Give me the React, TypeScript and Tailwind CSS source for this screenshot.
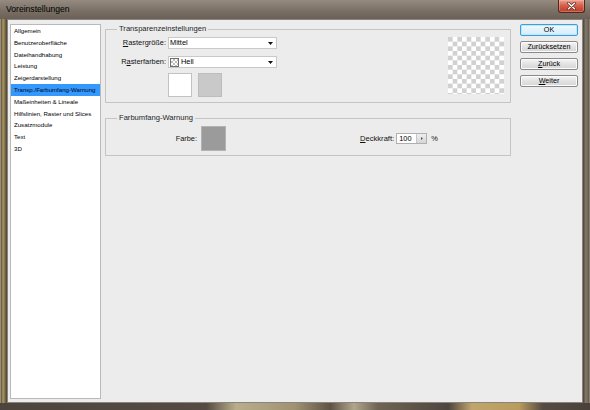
import React from "react";

const items = [
  "Allgemein",
  "Benutzeroberfläche",
  "Dateihandhabung",
  "Leistung",
  "Zeigerdarstellung",
  "Transp./Farbumfang-Warnung",
  "Maßeinheiten & Lineale",
  "Hilfslinien, Raster und Slices",
  "Zusatzmodule",
  "Text",
  "3D",
];

function Arrow() {
  return (
    <svg width="5" height="3" viewBox="0 0 5 3" className="shrink-0">
      <path d="M0 0h5L2.5 3z" fill="#111" />
    </svg>
  );
}

function Select({ children }: { children: React.ReactNode }) {
  return (
    <div className="ml-[2px] w-[109px] h-[12px] bg-white border border-[#c9c9c9] flex items-center pl-[1px] pr-[3px]">
      <div className="flex-1 flex items-center text-[7.4px] leading-none text-[#000]">{children}</div>
      <Arrow />
    </div>
  );
}

function Btn({ children, primary }: { children: React.ReactNode; primary?: boolean }) {
  return (
    <button
      className={
        primary
          ? "h-[12px] w-full rounded-[2px] border border-[#3d9fd8] bg-[linear-gradient(180deg,#f0f9fe,#d3ecfa)] text-[7.2px] leading-none text-[#000] shadow-[inset_0_0_0_1px_#bfe6fb]"
          : "h-[12px] w-full rounded-[2px] border border-[#8a8a8a] bg-[linear-gradient(180deg,#f6f6f6,#e2e2e2_50%,#d6d6d6)] text-[7.2px] leading-none text-[#000] shadow-[inset_0_0_0_1px_#fbfbfb]"
      }
    >
      {children}
    </button>
  );
}

export default function App() {
  return (
    <div className="w-[590px] h-[410px] flex flex-col overflow-hidden bg-[#6a6056] font-['Liberation_Sans',Arial,sans-serif] text-black">
      {/* title bar */}
      <div className="relative h-[19px] shrink-0 flex items-start bg-[linear-gradient(180deg,#958b81,#7a7066_55%,#6a6057)]">
        <span className="ml-[6px] mt-[4px] text-[8.6px] leading-[10px] text-[#000]">
          Voreinstellungen
        </span>
        <div className="absolute right-[5px] top-0 w-[27px] h-[13px] rounded-b-[3px] border border-t-0 border-[#4e2820] bg-[linear-gradient(180deg,#e9a292,#d4614b_45%,#bd3b27)] flex items-center justify-center shadow-[inset_0_0_0_1px_rgba(255,200,190,0.35)]">
          <svg width="9" height="8" viewBox="0 0 9 8">
            <path d="M1.5 1.2l6 5.6M7.5 1.2l-6 5.6" stroke="#5a2a22" strokeWidth="2.6" strokeLinecap="round" />
            <path d="M1.5 1.2l6 5.6M7.5 1.2l-6 5.6" stroke="#fff" strokeWidth="1.4" strokeLinecap="round" />
          </svg>
        </div>
      </div>

      <div className="flex-1 flex min-h-0">
        <div className="w-[7px] shrink-0 bg-[linear-gradient(90deg,#b3a894,#6b5e48_20%,#ae9a5e_45%,#7c6d4a_70%,#4b433b)]" />

        {/* client area */}
        <div className="flex-1 flex bg-[#ececec] border border-[#8a847c] pl-[2px] pt-[4px] pb-[3px] pr-[4px]">
          {/* category list */}
          <div className="w-[91px] shrink-0 bg-white border border-[#b9b9b9] flex flex-col">
            {items.map((it, i) => (
              <div
                key={it}
                className={
                  i === 5
                    ? "h-[11.8px] leading-[11.8px] pl-[3px] text-[6.1px] whitespace-nowrap bg-[#3399ff] text-[#050510]"
                    : "h-[11.8px] leading-[11.8px] pl-[3px] text-[6.1px] whitespace-nowrap text-[#000]"
                }
              >
                {it}
              </div>
            ))}
          </div>

          {/* groups */}
          <div className="w-[406px] shrink-0 ml-[4px] flex flex-col">
            <fieldset className="border border-[#c4c4c4] pl-[11px] pr-[6px] pt-[3px] pb-[5px]">
              <legend className="px-[2px] h-[10px] leading-[10px] text-[7.6px] text-[#1e1e2a]">
                Transparenzeinstellungen
              </legend>
              <div className="flex items-start">
                <div className="flex flex-col">
                  <div className="h-[12px] flex items-center">
                    <span className="w-[49px] text-right text-[7.4px] leading-none text-[#111]">
                      <u className="decoration-1 underline-offset-1">R</u>astergröße:
                    </span>
                    <Select>Mittel</Select>
                  </div>
                  <div className="mt-[7px] h-[12px] flex items-center">
                    <span className="w-[49px] text-right text-[7.4px] leading-none text-[#111]">
                      R<u className="decoration-1 underline-offset-1">a</u>sterfarben:
                    </span>
                    <Select>
                      <span className="w-[9px] h-[9px] mr-[2px] border border-[#6d6d6d] bg-[conic-gradient(#bdbdbd_25%,#fff_0_50%,#bdbdbd_0_75%,#fff_0)] bg-[length:4px_4px]" />
                      Hell
                    </Select>
                  </div>
                  <div className="mt-[5px] ml-[51px] flex gap-[6px]">
                    <div className="w-[24px] h-[24px] bg-white border border-[#c2c2c2]" />
                    <div className="w-[24px] h-[24px] bg-[#c9c9c9] border border-[#bdbdbd]" />
                  </div>
                </div>
                <div className="ml-auto w-[56px] h-[57px] bg-[conic-gradient(#fff_25%,#d1d1d1_0_50%,#fff_0_75%,#d1d1d1_0)] bg-[length:9.33px_9.33px]" />
              </div>
            </fieldset>

            <fieldset className="mt-[10px] border border-[#c4c4c4] pl-[11px] pr-[6px] pt-[3px] pb-[4px]">
              <legend className="px-[2px] h-[10px] leading-[10px] text-[7.6px] text-[#1e1e2a]">
                Farbumfang-Warnung
              </legend>
              <div className="flex items-center">
                <span className="w-[80px] text-right text-[7.4px] leading-none text-[#111]">Farbe:</span>
                <div className="ml-[4px] w-[25px] h-[25px] bg-[#9b9b9b] border border-[#b3b3b3]" />
                <span className="ml-[134px] text-[7.6px] leading-none text-[#111]">
                  <u className="decoration-1 underline-offset-1">D</u>eckkraft:
                </span>
                <div className="ml-[2px] w-[31px] h-[11px] bg-white border border-[#b0b0b0] flex">
                  <span className="flex-1 pl-[2px] text-[7.4px] leading-[9px] text-[#000]">100</span>
                  <span className="w-[10px] border-l border-[#c6c6c6] bg-[linear-gradient(180deg,#eeeeee,#d6d6d6)] flex items-center justify-center">
                    <svg width="2" height="3" viewBox="0 0 2 3">
                      <path d="M0 0l2 1.5L0 3z" fill="#555" />
                    </svg>
                  </span>
                </div>
                <span className="ml-[4px] text-[7.4px] leading-none text-[#111]">%</span>
              </div>
            </fieldset>
          </div>

          {/* buttons */}
          <div className="w-[58px] shrink-0 ml-[9px] flex flex-col gap-[5px]">
            <Btn primary>OK</Btn>
            <Btn>Zurücksetzen</Btn>
            <Btn>
              <u className="decoration-1 underline-offset-1">Z</u>urück
            </Btn>
            <Btn>
              <u className="decoration-1 underline-offset-1">W</u>eiter
            </Btn>
          </div>
        </div>

        <div className="w-[7px] shrink-0 bg-[linear-gradient(90deg,#49413a,#867c6c_40%,#675d51_80%,#9c9484)]" />
      </div>

      <div className="h-[7px] shrink-0 bg-[linear-gradient(90deg,#4d453d_0,#554b42_35%,#b8ae8c_40%,#9e9272_50%,#5e5446_56%,#b0a68c_60%,#6e6454_64%,#4e463e_76%,#c0a66c_80%,#b89c5c_88%,#554b42_92%,#4a423a)]" />
    </div>
  );
}
